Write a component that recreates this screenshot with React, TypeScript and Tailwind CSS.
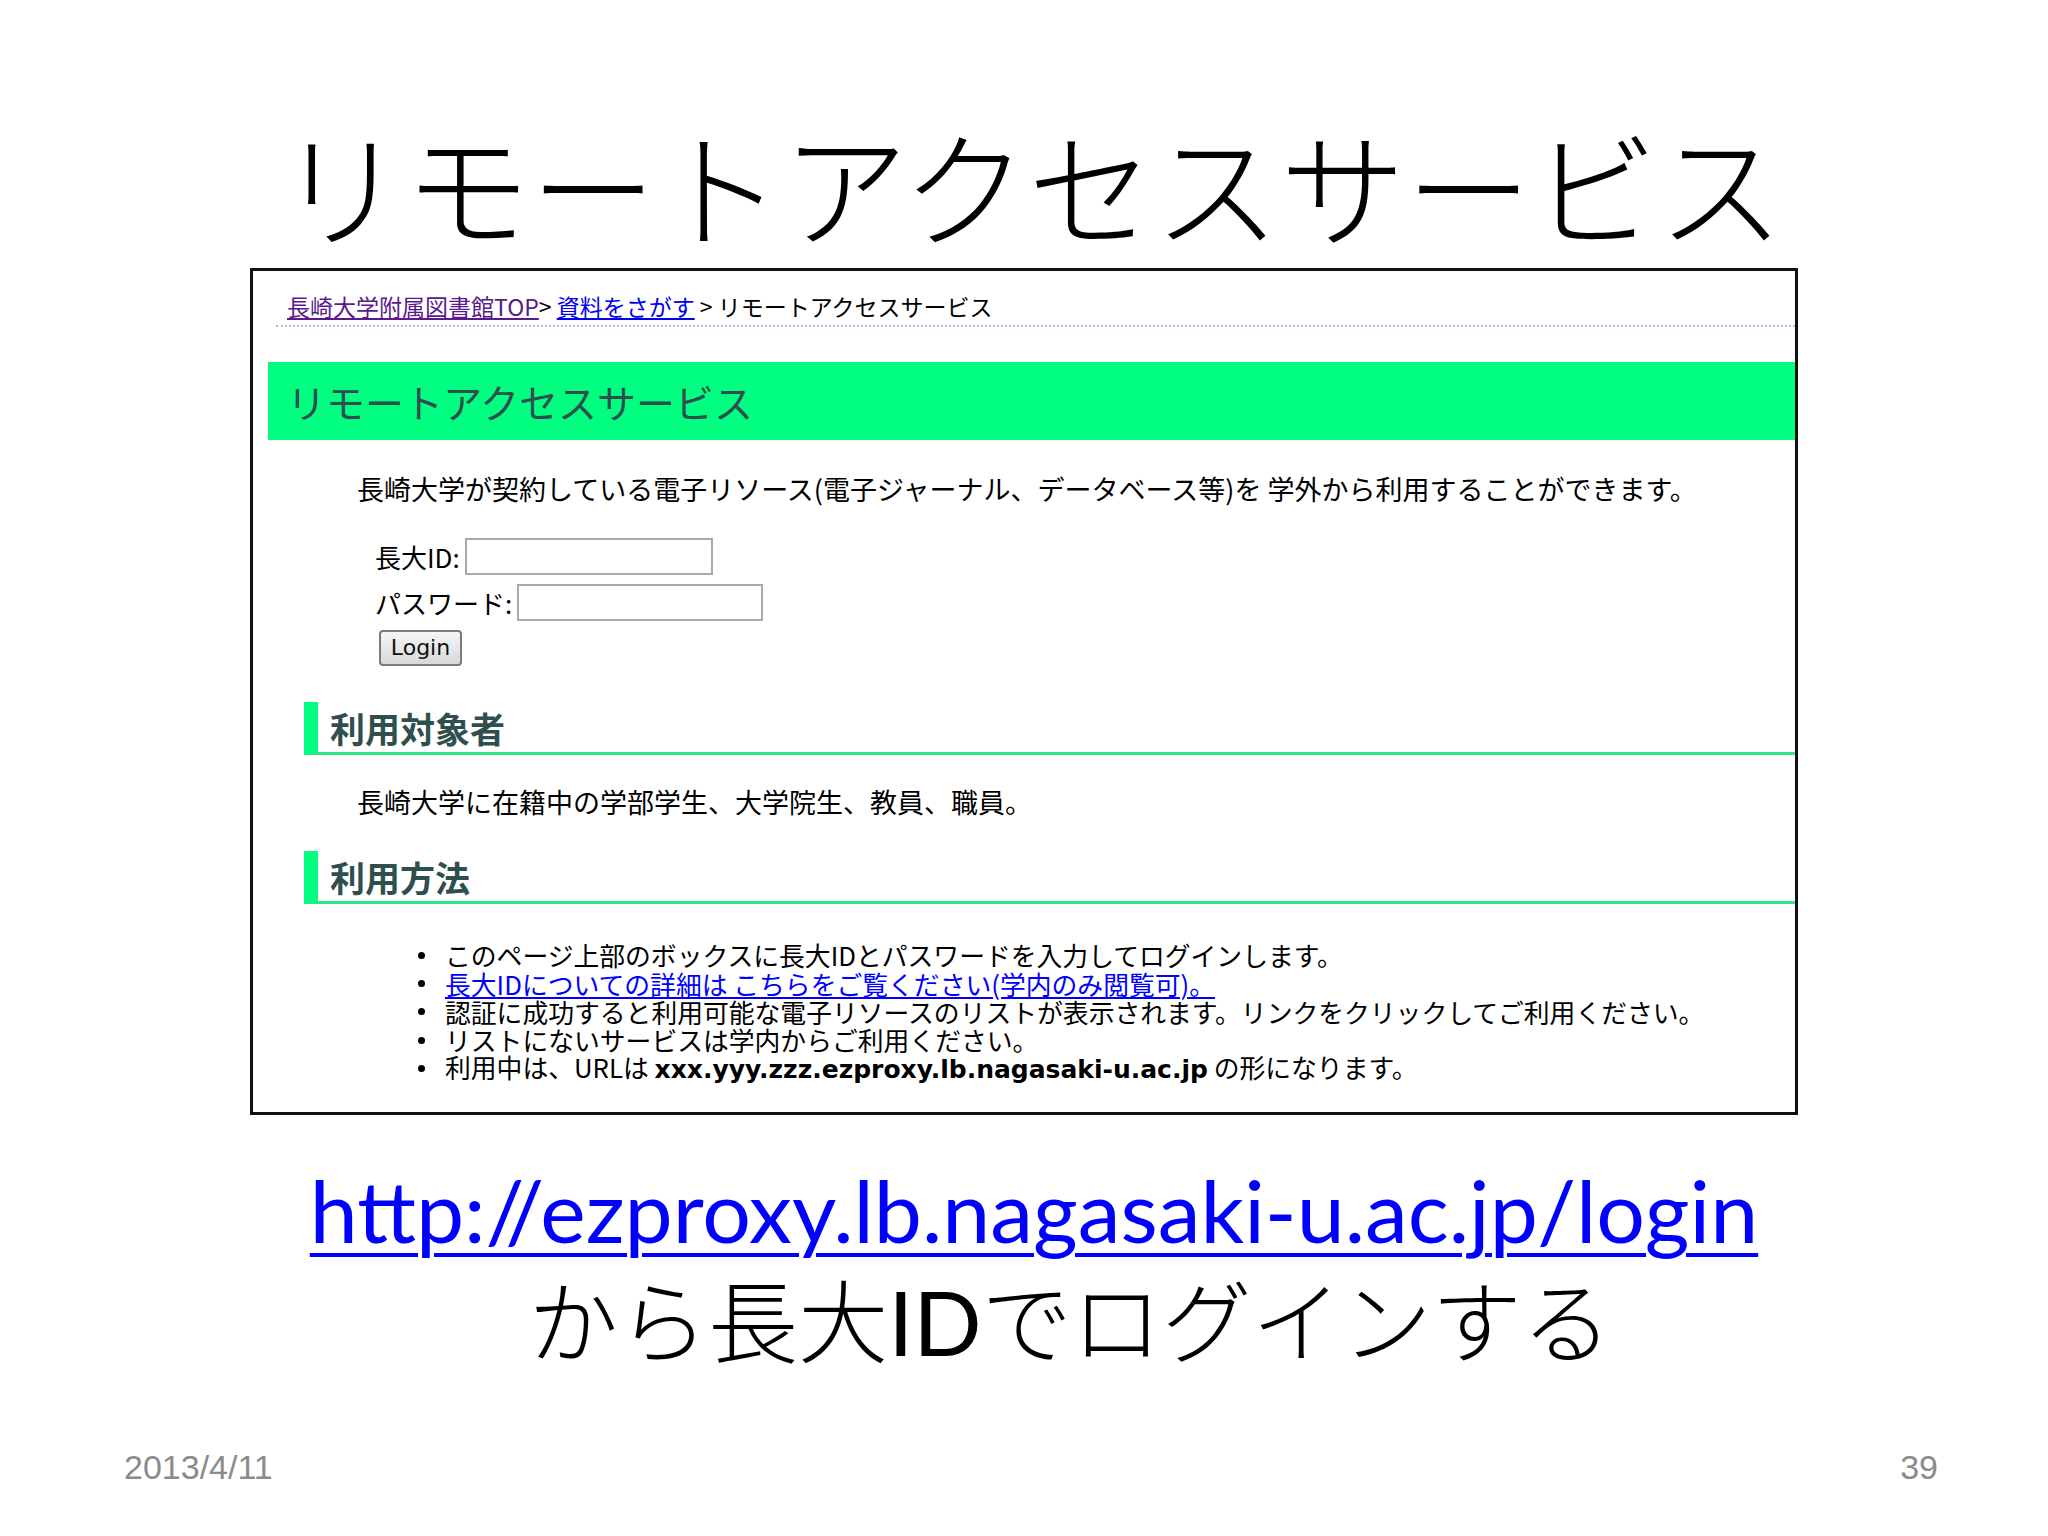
const jp = "font-['Noto_Sans_CJK_JP',sans-serif]";

function SectionHeading({ label }: { label: string }) {
  return (
    <div className="ml-[51px] h-[53px] flex items-center border-l-[14px] border-l-[#00ff80] border-b-[3px] border-b-[#2ee888] pl-[12px]">
      <span className={`${jp} text-[35px] font-bold leading-none text-[#2f4f4f]`}>{label}</span>
    </div>
  );
}

function Bullet({ children }: { children: React.ReactNode }) {
  return (
    <li className="flex items-center h-[28.3px]">
      <span className="w-[7px] h-[7px] rounded-full bg-black mr-[20px] shrink-0" />
      <span className="whitespace-nowrap">{children}</span>
    </li>
  );
}

export default function App() {
  return (
    <div className="w-[2048px] h-[1536px] bg-white flex flex-col overflow-hidden">
      <h1 className={`${jp} mt-[120px] h-[126px] leading-[126px] text-[126px] font-light text-black text-center pl-[14px] whitespace-nowrap`}>
        リモートアクセスサービス
      </h1>

      {/* screenshot of the web page */}
      <div className={`${jp} mt-[22px] ml-[250px] w-[1548px] h-[847px] border-[3px] border-[#111] text-black`}>
        <div className="ml-[23px] mt-[21px]">
          <div className="pl-[11px] h-[28px] leading-[28px] text-[23px] whitespace-nowrap">
            <a className="text-[#5a1a8a] underline">長崎大学附属図書館TOP</a>
            <span>&gt; </span>
            <a className="text-[#0000ee] underline">資料をさがす</a>
            <span> &gt; リモートアクセスサービス</span>
          </div>
          <div className="mt-[5px] border-t-2 border-dotted border-[#b4b4e4]" />
        </div>

        <div className="mt-[35px] ml-[15px] h-[78px] bg-[#00ff80] flex items-center pl-[19px]">
          <span className="text-[39px] leading-none text-[#2f4f4f]">リモートアクセスサービス</span>
        </div>

        <p className="mt-[33px] pl-[104px] h-[32px] leading-[32px] text-[27px] whitespace-nowrap">
          長崎大学が契約している電子リソース(電子ジャーナル、データベース等)を 学外から利用することができます。
        </p>

        <div className="mt-[33px] pl-[122px] flex items-center h-[37px]">
          <span className="text-[26px] leading-none mr-[5px]">長大ID:</span>
          <input className="w-[248px] h-[37px] border-2 border-[#a9a9a9] bg-white" />
        </div>
        <div className="mt-[9px] pl-[122px] flex items-center h-[37px]">
          <span className="text-[26px] leading-none mr-[5px]">パスワード:</span>
          <input type="password" className="w-[246px] h-[37px] border-2 border-[#a9a9a9] bg-white" />
        </div>
        <div className="mt-[9px] pl-[126px]">
          <button className="w-[83px] h-[36px] rounded-[4px] border-2 border-[#7a7a7a] bg-gradient-to-b from-[#f6f6f6] to-[#d8d8d8] font-['DejaVu_Sans',sans-serif] text-[22px] leading-none text-[#111]">
            Login
          </button>
        </div>

        <div className="mt-[36px]">
          <SectionHeading label="利用対象者" />
        </div>
        <p className="mt-[31px] pl-[104px] h-[32px] leading-[32px] text-[27px] whitespace-nowrap">
          長崎大学に在籍中の学部学生、大学院生、教員、職員。
        </p>

        <div className="mt-[33px]">
          <SectionHeading label="利用方法" />
        </div>

        <ul className="mt-[37px] pl-[165px] text-[25.8px] leading-none">
          <Bullet>このページ上部のボックスに長大IDとパスワードを入力してログインします。</Bullet>
          <Bullet>
            <a className="text-[#0000ff] underline">長大IDについての詳細は こちらをご覧ください(学内のみ閲覧可)。</a>
          </Bullet>
          <Bullet>認証に成功すると利用可能な電子リソースのリストが表示されます。リンクをクリックしてご利用ください。</Bullet>
          <Bullet>リストにないサービスは学内からご利用ください。</Bullet>
          <Bullet>
            利用中は、URLは{" "}
            <b className="font-['DejaVu_Sans',sans-serif] font-bold text-[25px]">xxx.yyy.zzz.ezproxy.lb.nagasaki-u.ac.jp</b>{" "}
            の形になります。
          </Bullet>
        </ul>
      </div>

      <div className="mt-[43px] h-[103px] leading-[103px] text-center pl-[20px] font-['Lato',sans-serif] text-[86px] whitespace-nowrap">
        <a className="text-[#0000ff] underline decoration-[4px] underline-offset-[10px]">http://ezproxy.lb.nagasaki-u.ac.jp/login</a>
      </div>
      <div className={`${jp} mt-[11px] h-[90px] leading-[90px] text-center pl-[92px] text-[90px] font-light whitespace-nowrap`}>
        から長大<span className="font-['Lato',sans-serif] font-normal">ID</span>でログインする
      </div>

      <div className="mt-auto pb-[50px] pl-[124px] pr-[110px] flex justify-between font-['Liberation_Sans',sans-serif] text-[34px] leading-[38px] text-[#8b8b8b]">
        <span>2013/4/11</span>
        <span>39</span>
      </div>
    </div>
  );
}
